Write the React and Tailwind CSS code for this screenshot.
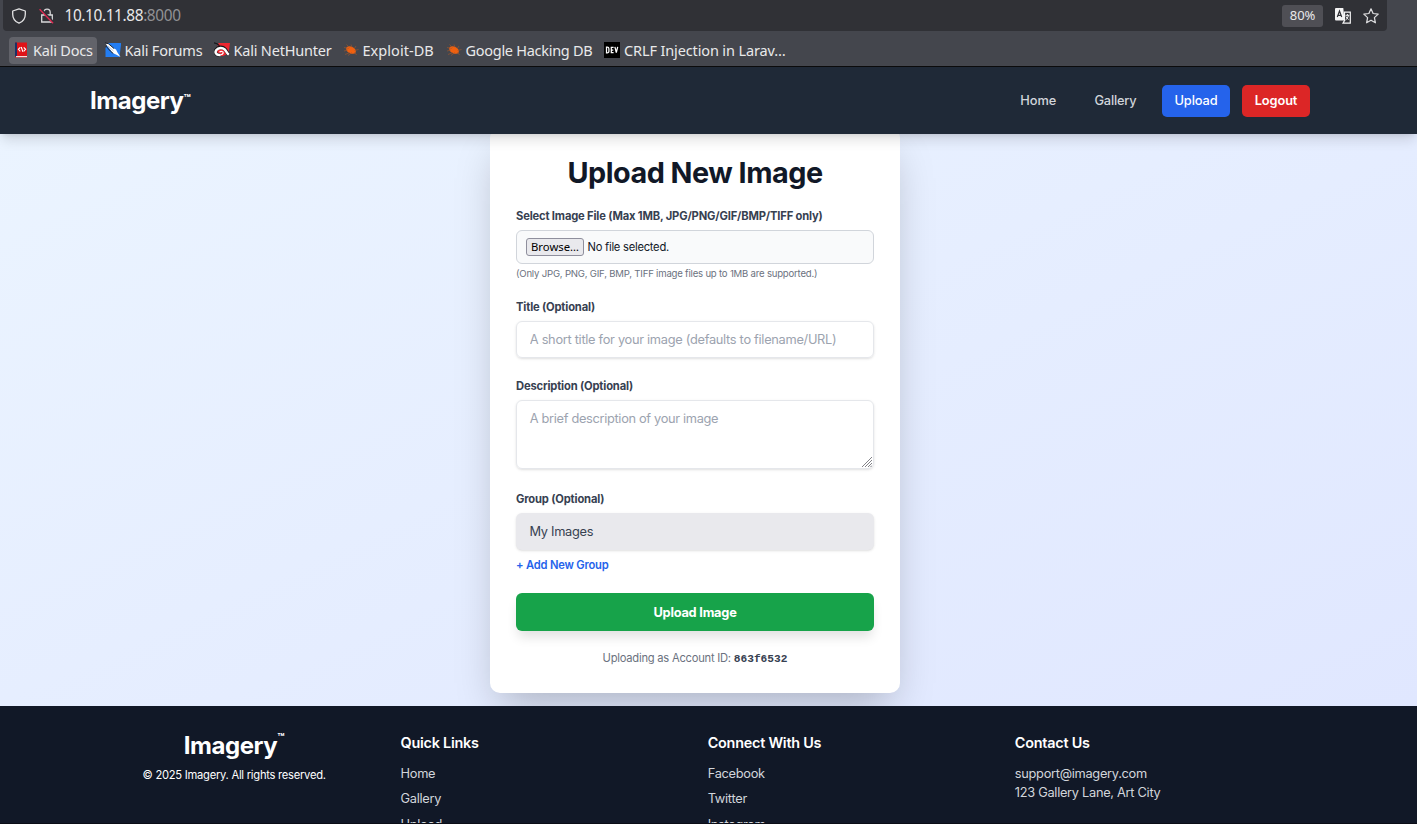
import React from "react";

const mark = "h-4 w-4 shrink-0";

function BookIcon() {
  return (
    <svg className={mark} viewBox="0 0 16 16">
      <rect x="2" y="0.5" width="12" height="15" fill="#e01218" />
      <rect x="2" y="0.5" width="2" height="14" fill="#1c3166" />
      <rect x="3" y="14" width="11" height="1.2" fill="#f4dede" />
      <path d="M7.300 5.300 5.400 7.300l1.900 2M10.700 5.300l1.900 2-1.900 2M8.200 5l1.700 4.800" stroke="#fff" fill="none" strokeWidth="1.100" />
    </svg>
  );
}

function ForumIcon() {
  return (
    <svg className={mark} viewBox="0 0 16 16">
      <path d="M3.500 1H16v2l-1.500 12H.5V6z" fill="#237df2" />
      <path d="M.5 1.500 4 2l5 4.500 2 1 1.500 3 3 4.500-4.500-2.500-3.500-1.500-2-3z" fill="#fff" />
      <path d="M0 .8l3.500 1L9 6.500M.8 4l4.500 5 3 2.500" stroke="#20252c" strokeWidth="1" fill="none" />
      <path d="M3 4l5.500 5" stroke="#8f9db0" strokeWidth=".6" />
    </svg>
  );
}

function HunterIcon() {
  return (
    <svg className={mark} viewBox="0 0 16 16">
      <path d="M4.500 1H16l-1.500 10.500L9 14H2.500V7z" fill="#ee2630" />
      <path d="M0 .8l3 1 2.500 2" stroke="#15171b" strokeWidth="1.200" fill="none" />
      <path d="M6.500 13C1.500 13.500.5 10 2.300 7.500 4.500 4.700 8.800 4.800 11 7.200c1.500 1.800 2 4 4 5.600" stroke="#15171b" strokeWidth="3.600" fill="none" />
      <path d="M6.500 13C1.500 13.500.8 10 2.400 7.900 4.500 5.200 8.600 5.400 10.600 7.400c1.600 1.700 2.200 3.800 4.200 5.400" stroke="#fff" strokeWidth="2.500" fill="none" />
      <path d="M5.500 10.200c1.500-1.600 4-.6 3.700.8-.3 1.300-1.700 1.700-3 1.800" stroke="#fff" strokeWidth="1.200" fill="none" />
    </svg>
  );
}

function BugIcon() {
  return (
    <svg className={mark} viewBox="0 0 16 16">
      <ellipse cx="8" cy="8" rx="5.200" ry="3.400" transform="rotate(28 8 8)" fill="#f0600f" />
      <path d="M1 5.500l5 1M3.500 2.500l3 3M8 2.500l1 3M13 4l-2 3M15.500 7.500l-4 1M1 9l4-1M2 12.500l5-2M5 13.500l4-3M13.500 13l-2-3" stroke="#a4582a" strokeWidth="0.600" fill="none" />
    </svg>
  );
}

function DevIcon() {
  return (
    <span className="flex h-4 w-4 shrink-0 items-center justify-center bg-black">
      <svg className="h-4 w-4" viewBox="0 0 16 16">
        <path d="M2.500 5.200v5.600h.8q1.600 0 1.600-1.600V6.800q0-1.600-1.600-1.600zM9.600 5.300H7.300v5.400h2.300M7.300 8h2M10.900 4.800l1.400 5.700 1.400-5.700" stroke="#fff" strokeWidth="1.250" fill="none" />
      </svg>
    </span>
  );
}

function Bookmark({ icon, active, className, children }) {
  return (
    <div className={"flex h-[27px] shrink-0 items-center gap-[4px] rounded-[4px] pl-1 " + (active ? "bg-[#62636a] " : "") + className}>
      {icon}
      <span className="whitespace-nowrap pt-px">{children}</span>
    </div>
  );
}

function BrowserChrome() {
  return (
    <div className="h-[67px] w-full border-b border-[#0c0c0d] bg-[#44464d] font-['Noto_Sans',sans-serif] text-[#e9e9ea]">
      <div className="ml-[3px] flex h-[31px] w-[1384px] items-center rounded-b-[4px] bg-[#303136] pr-[8px] pl-[8px]">
        <svg className="h-4 w-4" viewBox="0 0 16 16" fill="none" stroke="#e3e3e4" strokeWidth="1.300" strokeLinejoin="round">
          <path d="M8 .8 14.300 3v3.300C14.300 10.500 12 13.700 8 15.200 4 13.700 1.700 10.500 1.700 6.300V3z" />
        </svg>
        <svg className="ml-3 h-4 w-4" viewBox="0 0 16 16" fill="none" strokeWidth="1.300">
          <path d="M4.800 6.500V4.300a3.200 3.200 0 0 1 6.400 0v2.200M2.700 7h10.600v7H2.700z" stroke="#d8d8da" />
          <path d="M1.400 .8l13.500 14" stroke="#303136" strokeWidth="2.400" />
          <path d="M.6 1.200l13.500 14" stroke="#e22850" strokeWidth="1.300" />
        </svg>
        <span className="ml-[9.500px] text-[15.400px] leading-5 tracking-[-0.380px]">10.10.11.88<span className="text-[#919195]">:8000</span></span>
        <span className="ml-auto flex h-[22px] w-[41px] items-center justify-center rounded-[3px] bg-[#4f4f55] text-[13px] tracking-[-0.100px]">80%</span>
        <svg className="ml-3 h-4 w-4" viewBox="0 0 16 16">
          <path d="M1 0h7.300l1.200 12.500H1Q0 12.500 0 11.500V1Q0 0 1 0z" fill="#f5f5f6" />
          <path d="M2.300 9 4.500 3l2.200 6M3 7.300h3" stroke="#303136" strokeWidth="1.200" fill="none" />
          <path d="M9.500 4.200h5.800v11H8l1.500-2.700z" fill="#303136" stroke="#f5f5f6" strokeWidth="1.200" />
          <path d="M10.500 7.300h3.800M12.400 6v1.300M13.500 7.500q-.7 3-3 4.500M11 8.500q.8 2 2.600 3" stroke="#f5f5f6" fill="none" strokeWidth="1" />
        </svg>
        <svg className="ml-3 h-4 w-4" viewBox="0 0 16 16" fill="none" stroke="#dddddf" strokeWidth="1.250" strokeLinejoin="round">
          <path d="M8 .8l2.100 4.700 5.100.6-3.800 3.500 1 5.200L8 12.200l-4.400 2.600 1-5.200L.8 6.100l5.100-.6z" />
        </svg>
      </div>
      <div className="flex h-[35px] items-center pt-[3px] pl-[9px] text-[14.500px] tracking-[-0.200px]">
        <Bookmark icon={<BookIcon />} active className="w-[88px]">Kali Docs</Bookmark>
        <Bookmark icon={<ForumIcon />} className="ml-[3.500px] w-[105.500px]">Kali Forums</Bookmark>
        <Bookmark icon={<HunterIcon />} className="ml-[3.500px] w-[125px]">Kali NetHunter</Bookmark>
        <Bookmark icon={<BugIcon />} className="ml-1 w-[99px] tracking-[0.050px]">Exploit-DB</Bookmark>
        <Bookmark icon={<BugIcon />} className="ml-1 w-[154.500px] tracking-[-0.280px]">Google Hacking DB</Bookmark>
        <Bookmark icon={<DevIcon />} className="ml-1 w-[190px] tracking-[-0.130px]">CRLF Injection in Larav…</Bookmark>
      </div>
    </div>
  );
}

function Navbar() {
  return (
    <nav className="relative z-10 flex h-[67px] w-full items-center bg-[#1f2937] pr-[107px] pl-[90px] text-[12.800px] font-medium tracking-[-0.100px] text-[#d1d5db] shadow-[0_8px_12px_-2px_rgba(0,0,0,0.12),0_3px_5px_-3px_rgba(0,0,0,0.12)]">
      <div className="flex items-center text-[24px] font-bold tracking-[-0.450px] text-white">
        Imagery<span className="pb-px text-[11.500px] leading-none tracking-normal">™</span>
      </div>
      <div className="ml-auto flex items-center">
        <a className="pr-[12.800px]">Home</a>
        <a className="ml-[12.800px] px-[12.800px] tracking-[-0.200px]">Gallery</a>
        <a className="ml-[12.800px] flex h-8 w-[68px] items-center justify-center rounded-[5px] bg-[#2563eb] text-white">Upload</a>
        <a className="ml-3 flex h-8 w-[68px] items-center justify-center rounded-[5px] bg-[#dc2626] font-semibold text-white">Logout</a>
      </div>
    </nav>
  );
}

function Label({ children }) {
  return <label className="block text-[11.200px] leading-4 font-bold tracking-[-0.165px] text-[#374151]">{children}</label>;
}

function UploadCard() {
  return (
    <section className="-mt-[6px] h-[565px] w-[410px] rounded-[10px] bg-white px-[26px] pt-[25px] shadow-[0_20px_40px_-10px_rgba(0,0,0,0.25)]">
      <h1 className="text-center text-[28.800px] leading-[40px] font-bold tracking-[-0.500px] text-[#111827]">Upload New Image</h1>
      <div className="mt-[15px]">
        <Label>Select Image File (Max 1MB, JPG/PNG/GIF/BMP/TIFF only)</Label>
        <div className="mt-[6px] flex h-[34px] items-center rounded-[6px] border border-[#d1d5db] bg-[#f9fafb] pl-[9px] text-[11.200px] tracking-[-0.250px] text-[#111827]">
          <button className="h-[18px] w-[58px] rounded-[3px] border border-[#8f8f9d] bg-[#e9e9ed] font-['Noto_Sans',sans-serif] text-[11.300px] leading-4 tracking-normal text-black">Browse…</button>
          <span className="ml-[3.500px]">No file selected.</span>
        </div>
        <p className="mt-[3px] text-[9.600px] leading-[13px] tracking-[-0.210px] text-[#6b7280]">(Only JPG, PNG, GIF, BMP, TIFF image files up to 1MB are supported.)</p>
      </div>
      <div className="mt-[19px]">
        <Label>Title (Optional)</Label>
        <input className="mt-[6px] block h-[37px] w-full rounded-[6px] border border-[#e5e7eb] px-[12.800px] text-[12.800px] tracking-[-0.290px] shadow-sm placeholder:text-[#9ca3af]" placeholder="A short title for your image (defaults to filename/URL)" />
      </div>
      <div className="mt-[20px]">
        <Label>Description (Optional)</Label>
        <div className="relative mt-[6px]">
          <textarea className="block h-[69px] w-full resize-none rounded-[6px] border border-[#e5e7eb] px-[12.800px] py-[8px] text-[12.800px] leading-[19px] tracking-[-0.320px] shadow-sm placeholder:text-[#9ca3af]" placeholder="A brief description of your image" />
          <svg className="absolute right-[2px] bottom-[2px] h-[10px] w-[10px]" viewBox="0 0 10 10" stroke="#75757b" strokeWidth="0.900">
            <path d="M0 10 10 0M3 10l7-7M6 10l4-4M8.500 10l1.500-1.500" />
          </svg>
        </div>
      </div>
      <div className="mt-[22px]">
        <Label>Group (Optional)</Label>
        <div className="mt-[6px] flex h-[37px] items-center rounded-[6px] bg-[#e9e9ed] px-[13.500px] text-[12.800px] tracking-[-0.290px] text-[#374151] shadow-sm">My Images</div>
        <button className="mt-[7px] block text-[11.200px] leading-4 font-semibold tracking-[-0.200px] text-[#2563eb]">+ Add New Group</button>
      </div>
      <button className="mt-[20px] block h-[38px] w-full rounded-[6px] bg-[#17a34a] pt-px text-[12.800px] font-bold tracking-[-0.220px] text-white shadow-[0_8px_12px_-2px_rgba(0,0,0,0.12)]">Upload Image</button>
      <p className="mt-[19px] text-center text-[11.200px] leading-4 tracking-[-0.240px] text-[#6b7280]">
        Uploading as Account ID: <span className="font-['Liberation_Mono',monospace] font-bold tracking-normal text-[#374151]">863f6532</span>
      </p>
    </section>
  );
}

function FooterColumn({ title, items, tight }) {
  return (
    <div>
      <h3 className="text-[14.400px] leading-[22px] font-semibold tracking-[-0.230px] text-white">{title}</h3>
      <ul className={tight ? "mt-[10px] leading-[19px]" : "mt-[10px] flex flex-col gap-[6.400px] leading-[19px]"}>
        {items.map((item) => <li key={item}>{item}</li>)}
      </ul>
    </div>
  );
}

function Footer() {
  return (
    <footer className="h-[118px] w-full overflow-hidden border-b border-[#0b0d16] bg-[#111827] pt-[26px] text-[12.800px] tracking-[-0.290px] text-[#d1d5db]">
      <div className="ml-[93.400px] grid w-[1203px] grid-cols-4 gap-[25.600px]">
        <div className="text-center text-white">
          <div className="flex justify-center text-[24px] leading-[28px] font-bold tracking-[-0.450px]">
            Imagery<span className="pt-[2px] text-[11.500px] leading-[9px] tracking-normal">™</span>
          </div>
          <p className="mt-[7px] text-[11.200px] leading-4 tracking-[-0.260px]">© 2025 Imagery. All rights reserved.</p>
        </div>
        <FooterColumn title="Quick Links" items={["Home", "Gallery", "Upload"]} />
        <FooterColumn title="Connect With Us" items={["Facebook", "Twitter", "Instagram"]} />
        <FooterColumn title="Contact Us" items={["support@imagery.com", "123 Gallery Lane, Art City"]} tight />
      </div>
    </footer>
  );
}

export default function App() {
  return (
    <div className="flex h-[824px] w-[1417px] flex-col overflow-hidden font-['Inter',sans-serif]">
      <BrowserChrome />
      <Navbar />
      <main className="flex h-[572px] items-start overflow-hidden bg-linear-[155deg] from-[#ebf4ff] to-[#e0e7ff] pl-[490px]">
        <UploadCard />
      </main>
      <Footer />
    </div>
  );
}
